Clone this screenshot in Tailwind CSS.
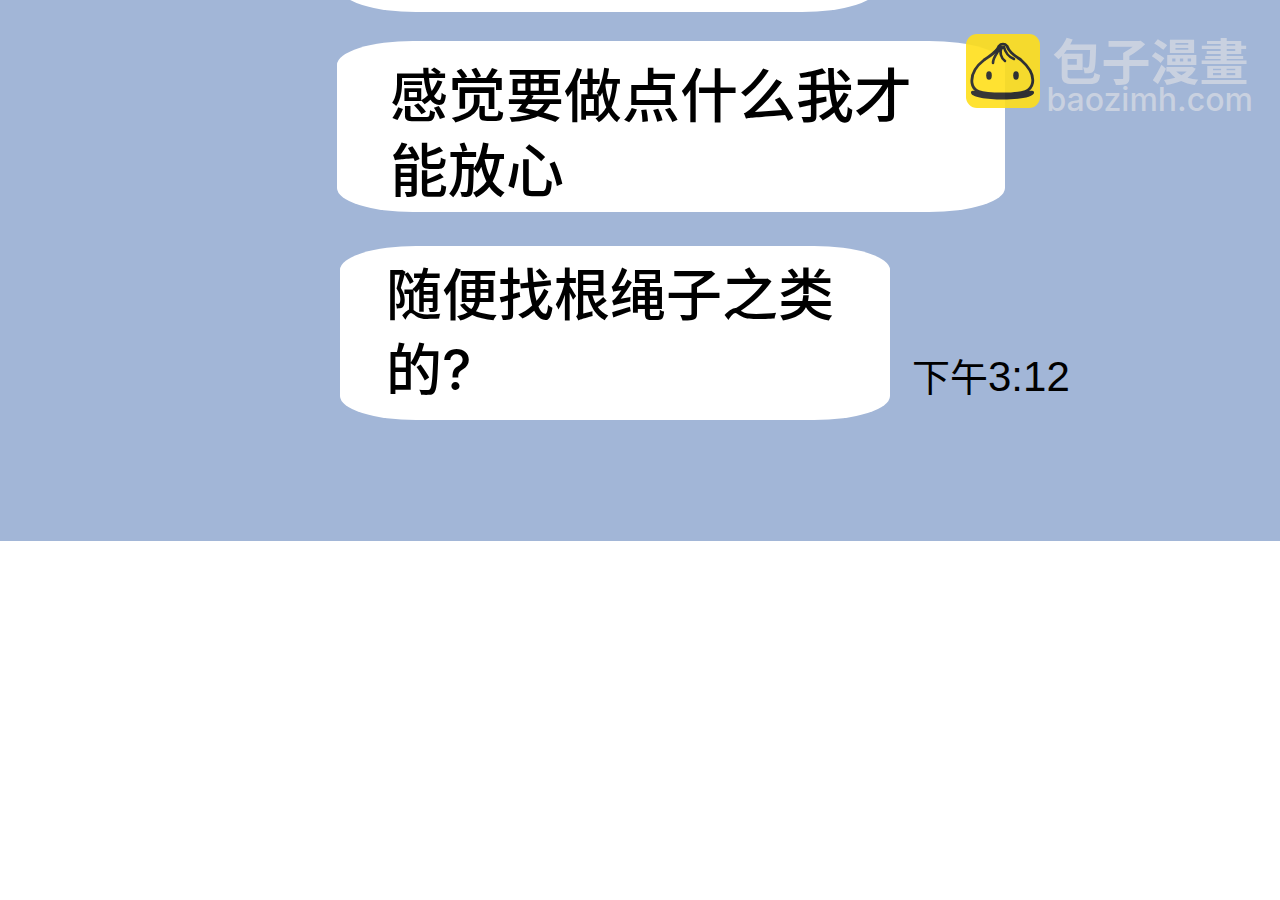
<!DOCTYPE html>
<html lang="zh-CN">
<head>
    <meta charset="UTF-8">
    <meta name="viewport" content="width=device-width, initial-scale=1.0">
    <title>包子漫畫</title>
    <script src="https://cdn.jsdelivr.net/npm/@tailwindcss/browser@4"></script>
</head>
<body class="bg-white text-black font-['Liberation_Sans','Noto_Sans_CJK_SC',sans-serif]">

    <!-- Chat -->
    <main class="relative overflow-hidden bg-[#a2b6d7] pl-[337px] pb-[121px]">

        <!-- previous message, scrolled out of view -->
        <div class="-mt-[159px] ml-[3px] h-[171px] w-[538px] max-w-full rounded-[76px/24px] bg-white"></div>

        <div class="mt-[29px] w-[668px] max-w-full rounded-[76px/24px] bg-white pt-[18px] pb-[3px] pl-[53px] pr-12">
            <p class="text-[58px] leading-[75px] font-medium">感觉要做点什么我才能放心</p>
        </div>

        <div class="mt-[34px] ml-[3px] flex items-end gap-[22px]">
            <div class="w-[550px] rounded-[76px/24px] bg-white py-3 pl-[46px] pr-12">
                <p class="text-[56px] leading-[75px] font-medium font-['Inter','Noto_Sans_CJK_SC',sans-serif]">随便找根绳子之类的?</p>
            </div>
            <time datetime="15:12" class="pb-3.5 text-[38px] leading-[56px]">下午<span class="text-[42px]">3:12</span></time>
        </div>

        <!-- Watermark -->
        <div class="absolute top-[34px] right-[27px] flex items-start gap-1.5">
            <svg class="size-[74px] opacity-90" viewBox="0 0 74 74" fill="none" aria-hidden="true">
                <rect width="74" height="74" rx="11" fill="#ffdf1b"/>
                <path d="M5 58C6 56 10 57 14 58L58 58C63 57 67 56 68 58C69 63 53 65.500 37 65.500C20 65.500 4 63 5 58Z" fill="#222"/>
                <path d="M33 12C31 18 25 21 18 26C9 33 5 41 6 49C7 57 13 60 36 60C59 60 65 57 66.500 49C68 41 63 33 55 26C48 21 43 18 41 12C39 9.500 35 9.500 33 12Z" fill="#ffdf1b" stroke="#222" stroke-width="2.800"/>
                <path d="M34 13C33 18 27 22 27 29M36 13C33 18 35 24 39 27M38 13C39 18 43 23 48 25" stroke="#222" stroke-width="2.600" stroke-linecap="round"/>
                <ellipse cx="23" cy="41.500" rx="2.800" ry="4.200" fill="#222"/>
                <ellipse cx="50" cy="41.500" rx="2.800" ry="4.200" fill="#222"/>
            </svg>
            <div class="text-[#c9d1e0]">
                <p class="pl-1.5 text-[49px] leading-[50px] font-bold font-['Noto_Sans_CJK_TC',sans-serif]">包子漫畫</p>
                <p class="text-[32px] leading-[32px] font-medium font-['Inter',sans-serif]">baozimh.com</p>
            </div>
        </div>
    </main>

</body>
</html>
